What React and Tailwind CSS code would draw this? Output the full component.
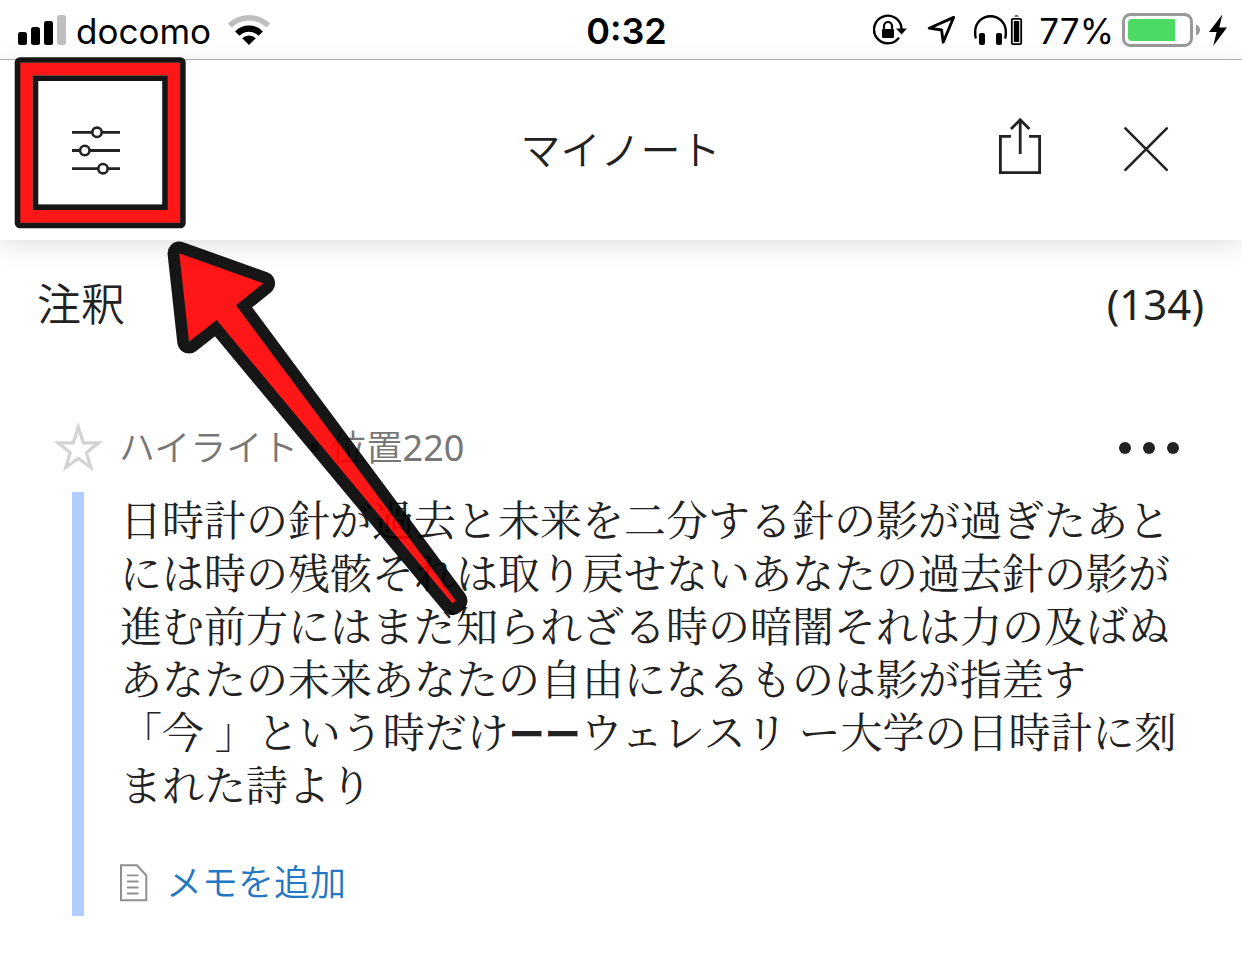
import { useState } from "react";

const quoteStart = `日時計の針が過去と未来を二分する針の影が過ぎたあと
には時の残骸それは取り戻せないあなたの過去針の影が
進む前方にはまだ知られざる時の暗闇それは力の及ばぬ
あなたの未来あなたの自由になるものは影が指差す
「今 」という時だけ`;
const quoteEnd = `ウェレスリ ー大学の日時計に刻
まれた詩より`;

function SignalIcon() {
  return (
    <svg width="48" height="30" viewBox="18 15 48 30" aria-hidden="true">
      <rect x="18" y="32" width="9" height="13" rx="2.5" />
      <rect x="31" y="27" width="9" height="18" rx="2.5" />
      <rect x="44" y="21" width="9" height="24" rx="2.5" />
      <rect x="57" y="15" width="9" height="30" rx="2.5" fill="#bfbfbf" />
    </svg>
  );
}

function WifiIcon() {
  return (
    <svg width="42" height="30" viewBox="228 15 42 30" fill="none" aria-hidden="true">
      <path d="M229.8 25.6A27.4 27.4 0 0 1 268.2 25.6" stroke="#bfbfbf" strokeWidth="5.4" />
      <path d="M237.3 33.6A16.2 16.2 0 0 1 260.7 33.6" stroke="#000" strokeWidth="6.2" />
      <path d="M249 45L242.2 38.2A9.6 9.6 0 0 1 255.8 38.2Z" fill="#000" />
    </svg>
  );
}

function RotationLockIcon() {
  return (
    <svg width="34" height="32" viewBox="875 14 34 32" fill="none" aria-hidden="true">
      <path d="M901 37.6A13.8 13.8 0 1 1 903.6 29" stroke="#000" strokeWidth="2.4" />
      <path d="M898 28.6H909L903.6 34.6Z" fill="#000" />
      <path d="M886 30V26A4 4 0 0 1 894 26V30" stroke="#000" strokeWidth="2.2" />
      <rect x="884" y="29" width="12" height="9" rx="1.2" fill="#000" />
    </svg>
  );
}

function LocationIcon() {
  return (
    <svg width="28" height="30" viewBox="928 16 28 30" fill="none" aria-hidden="true">
      <path
        d="M954.6 18.4L930.2 29.2L942.6 31L944.2 43.2Z"
        stroke="#000"
        strokeWidth="2.8"
        strokeLinejoin="round"
      />
    </svg>
  );
}

function HeadphonesIcon() {
  return (
    <svg width="50" height="32" viewBox="974 14 50 32" fill="none" aria-hidden="true">
      <path d="M977 38.5C975.8 36 976.2 33 976.2 31.5A15.2 15.2 0 0 1 1006.8 31.5C1006.8 33 1007.2 36 1006 38.5" stroke="#000" strokeWidth="2.4" />
      <rect x="980" y="33" width="6" height="12" rx="2" fill="#000" />
      <rect x="997" y="33" width="6" height="12" rx="2" fill="#000" />
      <rect x="1012.8" y="18.8" width="9.4" height="25.4" rx="1.2" stroke="#000" strokeWidth="1.8" />
      <rect x="1014.8" y="21" width="5.4" height="21" fill="#000" />
      <path d="M1015 16.5Q1017.5 14 1020 16.5Z" fill="#000" />
    </svg>
  );
}

function BatteryIcon() {
  return (
    <svg width="78" height="34" viewBox="1122 13 78 34" fill="none" aria-hidden="true">
      <rect x="1123.5" y="14.5" width="68" height="31" rx="7" stroke="#999" strokeWidth="3" />
      <path d="M1175 19V41H1132Q1128 41 1128 37V23Q1128 19 1132 19Z" fill="#4cd964" />
      <path d="M1196 24.5Q1200 26 1200 30T1196 35.5Z" fill="#999" />
    </svg>
  );
}

function BoltIcon() {
  return (
    <svg width="18" height="32" viewBox="1209 14 18 32" aria-hidden="true">
      <path d="M1222.3 14.5L1209 32H1216.6L1213.2 46L1227 27.4H1219.3Z" />
    </svg>
  );
}

function FilterIcon() {
  return (
    <svg width="48" height="50" viewBox="72 125 48 50" fill="none" stroke="#222" aria-hidden="true">
      <path d="M72 132.3H120M72 150.5H120M72 168.6H120" strokeWidth="2.8" />
      <g fill="#fff" strokeWidth="2.6">
        <circle cx="97" cy="132.3" r="4.7" />
        <circle cx="84.8" cy="150.5" r="4.7" />
        <circle cx="103" cy="168.7" r="4.7" />
      </g>
    </svg>
  );
}

function ShareIcon() {
  return (
    <svg width="44" height="66" viewBox="998 117 44 66" fill="none" stroke="#222" strokeWidth="2.8" aria-hidden="true">
      <path d="M1011 136.3H1000.4V172.6H1039.6V136.3H1029" />
      <path d="M1020.2 154V120M1011 129L1020.2 119.7L1029.4 129" />
    </svg>
  );
}

function CloseIcon() {
  return (
    <svg width="46" height="48" viewBox="1123 126 46 48" stroke="#222" strokeWidth="2.6" strokeLinecap="round" aria-hidden="true">
      <path d="M1125.4 128.4L1166.8 169.8M1166.8 128.4L1125.4 169.8" />
    </svg>
  );
}

function StarIcon({ filled }) {
  return (
    <svg width="50" height="50" viewBox="53 423 50 50" fill={filled ? "#d3d3d3" : "none"} aria-hidden="true">
      <path
        d="M78.3 427L83.3 442.8H98.5L86.4 452.7L90.9 467.5L78.3 458.5L65.7 467.5L70.2 452.7L58.1 442.8H73.3Z"
        stroke="#d3d3d3"
        strokeWidth="3.2"
      />
    </svg>
  );
}

function MemoIcon() {
  return (
    <svg width="28" height="38" viewBox="120 864 28 38" fill="none" stroke="#8f8f8f" aria-hidden="true">
      <path d="M121 865.3H137L146.3 875.5V900.3H121Z" strokeWidth="2" />
      <path d="M127 875.3H138.5M127 881.5H138.5M127 887.5H138.5M127 893.5H138.5" strokeWidth="1.8" />
    </svg>
  );
}

// Red frame round the filter button and the arrow that points to it
function Callout() {
  return (
    <svg
      className="pointer-events-none absolute left-0 top-0 z-20 opacity-[0.91]"
      width="480"
      height="630"
      viewBox="0 0 480 630"
      fill="none"
      aria-hidden="true"
    >
      <rect x="26.3" y="69" width="147.4" height="147.4" stroke="#f00" strokeWidth="13" />
      <rect x="17.5" y="60" width="165.4" height="165.5" rx="2.5" stroke="#000" strokeWidth="5.6" />
      <rect x="35.5" y="78.2" width="129.5" height="129" stroke="#000" strokeWidth="5.6" />
      <path
        d="M179.3 253.3L263.3 283.3L236 305.3L455.7 600.7L452.3 603.3L216.7 320L189 341.7Z"
        fill="#f00"
        stroke="#000"
        strokeWidth="23.5"
        strokeLinejoin="round"
        style={{ paintOrder: "stroke" }}
      />
    </svg>
  );
}

export default function App() {
  const [starred, setStarred] = useState(false);

  return (
    <div className="relative min-h-screen bg-white font-['Noto_Sans','Noto_Sans_CJK_JP',sans-serif] text-[#222]">
      {/* STATUS BAR */}
      <div className="grid h-[60px] grid-cols-[1fr_auto_1fr] items-center border-b border-[#b2b2b2] pl-[18px] pr-[15px] font-['Inter',sans-serif] text-[35px] leading-9 text-black">
        <div className="flex items-center">
          <SignalIcon />
          <span className="ml-[10px] mr-[17px] pt-0.5">docomo</span>
          <WifiIcon />
        </div>
        <span className="pl-2 pt-0.5 text-[36px] font-semibold">0:32</span>
        <div className="flex items-center justify-end">
          <RotationLockIcon />
          <span className="ml-5 mr-[18px] flex">
            <LocationIcon />
          </span>
          <HeadphonesIcon />
          <span className="ml-4 mr-2 pt-0.5">77%</span>
          <BatteryIcon />
          <span className="ml-[9px] flex">
            <BoltIcon />
          </span>
        </div>
      </div>

      {/* HEADER */}
      <header className="relative z-10 grid h-[180px] grid-cols-[1fr_auto_1fr] items-center bg-white pl-[72px] pr-[73px] shadow-[0_6px_24px_rgba(0,0,0,0.12)]">
        <button type="button" aria-label="フィルター" className="justify-self-start">
          <FilterIcon />
        </button>
        <h1 className="pb-1 font-['Noto_Sans_CJK_JP',sans-serif] text-[40px] font-[350] leading-[60px]">
          マイノート
        </h1>
        <div className="flex items-center justify-self-end">
          <button type="button" aria-label="共有" className="mr-[81px]">
            <ShareIcon />
          </button>
          <button type="button" aria-label="閉じる">
            <CloseIcon />
          </button>
        </div>
      </header>

      {/* NOTES */}
      <main className="pt-8">
        <div className="flex items-center justify-between pl-[37px] pr-[38px] leading-[64px]">
          <h2 className="text-[44px] font-[350]">注釈</h2>
          <span className="text-[42px]">(134)</span>
        </div>

        <article className="mt-[88px]">
          <div className="flex h-12 items-center pl-[53px] pr-[63px]">
            <button
              type="button"
              aria-label="スター"
              aria-pressed={starred}
              onClick={() => setStarred(!starred)}
            >
              <StarIcon filled={starred} />
            </button>
            <p className="ml-4 text-[36px] leading-[48px] text-[#777]">
              <span className="font-[350]">ハイライト</span> • <span className="font-[350]">位置</span>220
            </p>
            <button type="button" aria-label="メニュー" className="ml-auto flex gap-3">
              <span className="size-3 rounded-full bg-[#222]" />
              <span className="size-3 rounded-full bg-[#222]" />
              <span className="size-3 rounded-full bg-[#222]" />
            </button>
          </div>

          <div className="ml-[72px] mt-5 border-l-[12px] border-[#b1cdfd] pb-[14px] pl-9">
            <blockquote className="whitespace-pre font-['Noto_Serif_CJK_JP','Noto_Sans_CJK_JP',serif] text-[42px] leading-[53px]">
              {quoteStart}
              <span className="font-['Noto_Sans_CJK_JP',sans-serif] text-[36px] font-bold leading-9">ーー</span>
              {quoteEnd}
            </blockquote>
            <button
              type="button"
              className="mt-[54px] flex items-center gap-[18px] text-[36px] font-[350] leading-9 text-[#2477c2]"
            >
              <MemoIcon />
              メモを追加
            </button>
          </div>
        </article>
      </main>

      <Callout />
    </div>
  );
}
